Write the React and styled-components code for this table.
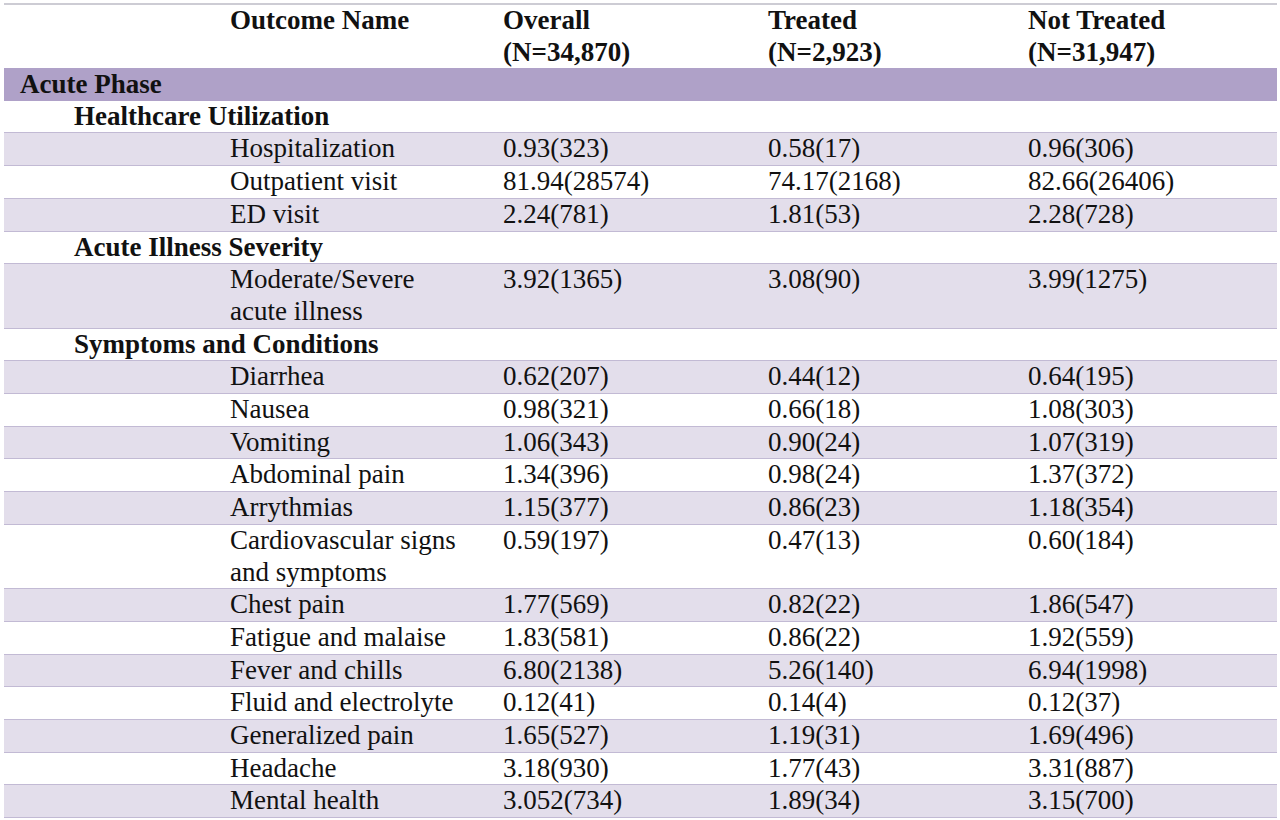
import styled, { createGlobalStyle } from "styled-components";

const GlobalStyle = createGlobalStyle`
  html, body {
    margin: 0;
    padding: 0;
    background: #ffffff;
  }
  body {
    font-family: "Liberation Serif", "Times New Roman", serif;
    color: #111111;
  }
`;

const columns = "218px 273px 265px 260px 1fr";

const sections = [
  {
    title: "Acute Phase",
    groups: [
      {
        title: "Healthcare Utilization",
        rows: [
          ["Hospitalization", "0.93(323)", "0.58(17)", "0.96(306)"],
          ["Outpatient visit", "81.94(28574)", "74.17(2168)", "82.66(26406)"],
          ["ED visit", "2.24(781)", "1.81(53)", "2.28(728)"],
        ],
      },
      {
        title: "Acute Illness Severity",
        rows: [["Moderate/Severe acute illness", "3.92(1365)", "3.08(90)", "3.99(1275)"]],
      },
      {
        title: "Symptoms and Conditions",
        rows: [
          ["Diarrhea", "0.62(207)", "0.44(12)", "0.64(195)"],
          ["Nausea", "0.98(321)", "0.66(18)", "1.08(303)"],
          ["Vomiting", "1.06(343)", "0.90(24)", "1.07(319)"],
          ["Abdominal pain", "1.34(396)", "0.98(24)", "1.37(372)"],
          ["Arrythmias", "1.15(377)", "0.86(23)", "1.18(354)"],
          ["Cardiovascular signs and symptoms", "0.59(197)", "0.47(13)", "0.60(184)"],
          ["Chest pain", "1.77(569)", "0.82(22)", "1.86(547)"],
          ["Fatigue and malaise", "1.83(581)", "0.86(22)", "1.92(559)"],
          ["Fever and chills", "6.80(2138)", "5.26(140)", "6.94(1998)"],
          ["Fluid and electrolyte", "0.12(41)", "0.14(4)", "0.12(37)"],
          ["Generalized pain", "1.65(527)", "1.19(31)", "1.69(496)"],
          ["Headache", "3.18(930)", "1.77(43)", "3.31(887)"],
          ["Mental health", "3.052(734)", "1.89(34)", "3.15(700)"],
        ],
      },
    ],
  },
];

export default function App() {
  return (
    <>
      <GlobalStyle />
      <Page>
        <Table>
          <HeaderRow>
            <Cell />
            <HeadCell>Outcome Name</HeadCell>
            <HeadCell>
              Overall
              <br />
              (N=34,870)
            </HeadCell>
            <HeadCell>
              Treated
              <br />
              (N=2,923)
            </HeadCell>
            <HeadCell>
              Not Treated
              <br />
              (N=31,947)
            </HeadCell>
          </HeaderRow>
          {sections.map((section) => (
            <div key={section.title}>
              <SectionRow>{section.title}</SectionRow>
              {section.groups.map((group) => (
                <div key={group.title}>
                  <GroupRow>{group.title}</GroupRow>
                  {group.rows.map(([name, ...values], i) => (
                    <DataRow key={name} striped={i % 2 === 0}>
                      <Cell />
                      <NameCell>{name}</NameCell>
                      {values.map((value, j) => (
                        <Cell key={j}>{value}</Cell>
                      ))}
                    </DataRow>
                  ))}
                </div>
              ))}
            </div>
          ))}
        </Table>
      </Page>
    </>
  );
}

const Page = styled.div`
  padding: 3px 3px 0 4px;
`;

const Table = styled.div`
  border-top: 2px solid #cdccd4;
  font-size: 27px;
  line-height: 31.7px;
`;

const HeaderRow = styled.div`
  display: grid;
  grid-template-columns: ${columns};
  line-height: 31.5px;
`;

const Cell = styled.div`
  padding: 0 8px;
`;

const NameCell = styled(Cell)`
  padding-right: 30px;
`;

const HeadCell = styled(Cell)`
  font-weight: bold;
`;

const SectionRow = styled.div`
  background: #afa1c8;
  font-weight: bold;
  padding: 0.5px 16px 0.5px;
`;

const GroupRow = styled.div`
  font-weight: bold;
  padding-left: 70px;
  border-bottom: 1px solid #c2bad4;
`;

const DataRow = styled.div`
  display: grid;
  grid-template-columns: ${columns};
  background: ${({ striped }) => (striped ? "#e3deeb" : "#ffffff")};
  border-bottom: 1px solid #c2bad4;
`;
